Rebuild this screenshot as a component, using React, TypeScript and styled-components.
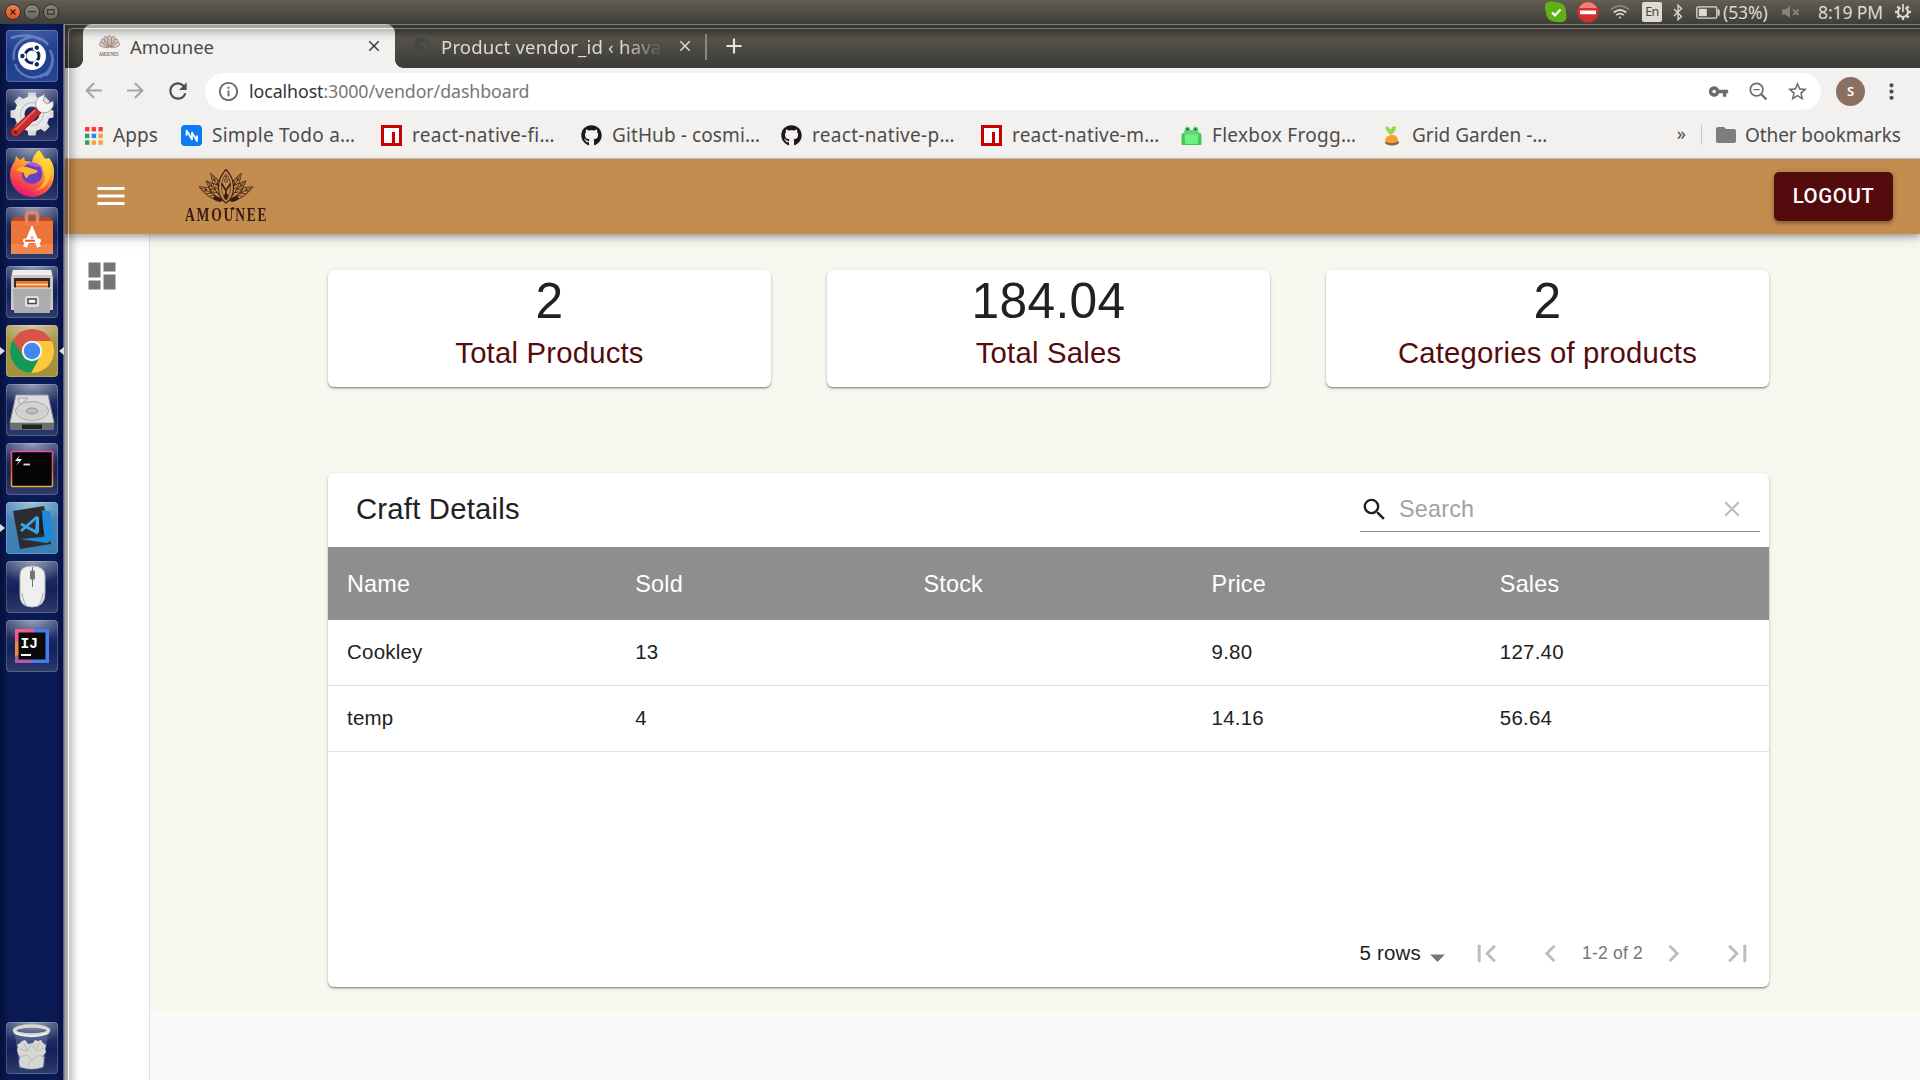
import React from "react";
import styled, { createGlobalStyle, css } from "styled-components";
import {
  MdArrowBack, MdArrowForward, MdRefresh, MdInfoOutline, MdVpnKey, MdStarBorder, MdMoreVert,
  MdFolder, MdMenu, MdDashboard, MdSearch, MdClear, MdFirstPage, MdLastPage, MdChevronLeft,
  MdChevronRight, MdArrowDropDown, MdClose, MdAdd, MdPublic,
} from "react-icons/md";
import { FaGithub } from "react-icons/fa";

const UI = `"Noto Sans", "Open Sans", sans-serif`;
const PAGE = `"Liberation Sans", Arial, sans-serif`;
const Z = 1.4625;

const Global = createGlobalStyle`
  * { box-sizing: border-box; }
  body { margin: 0; background: #0a1950; overflow: hidden; }
  svg { display: block; flex: none; }
`;

const Screen = styled.div`
  width: 1920px; height: 1080px; display: flex; flex-direction: column;
  font-family: ${UI}; overflow: hidden;
`;

/* ---------- system panel ---------- */
const Panel = styled.header`
  height: 24px; flex: none; display: flex; align-items: center; justify-content: space-between;
  padding: 0 9px 0 5px; color: #dfdbd2;
  background: linear-gradient(#66624c 0, #5d5a51 2px, #3f3e39 100%);
`;
const WindowControls = styled.div`display: flex; gap: 3px; padding-bottom: 1px;`;
const Control = styled.span<{ $close?: boolean }>`
  width: 16px; height: 16px; border-radius: 50%; border: 1px solid #33322d;
  display: grid; place-items: center;
  background: ${(p) => (p.$close ? "linear-gradient(#f4835a, #e2501f)" : "linear-gradient(#8a877f, #6a675f)")};
`;
const Tray = styled.div`display: flex; align-items: center; height: 24px;`;
const TrayItem = styled.span<{ $w: number; $gap?: number }>`
  width: ${(p) => p.$w}px; margin-left: ${(p) => p.$gap || 0}px; height: 24px;
  display: flex; align-items: center; flex: none;
`;
const TrayText = styled(TrayItem)<{ $ls: number }>`
  font-size: 17.5px; letter-spacing: ${(p) => p.$ls}px; white-space: nowrap;
`;
const Lang = styled.span`
  width: 20px; height: 20px; background: #dfdbd2; color: #45443e; border-radius: 2px;
  font-size: 12.5px; line-height: 20px; text-align: center; letter-spacing: -0.6px;
`;

/* ---------- launcher ---------- */
const Desktop = styled.div`flex: 1; display: flex; min-height: 0;`;
const Launcher = styled.nav`
  width: 65px; flex: none; display: flex; flex-direction: column; justify-content: space-between;
  padding: 6px 0 6px; background: linear-gradient(90deg, #05103c, #0a1a54 14%, #0a1a54 85%, #06124a 97%, #8d8498 98%);
`;
const LauncherGroup = styled.div`display: flex; flex-direction: column; gap: 7px;`;
const Slot = styled.div<{ $left?: boolean; $right?: boolean }>`
  height: 52px; display: flex; align-items: center; width: 64px;
  &::before, &::after { content: ""; width: 5px; height: 8px; flex: none; }
  &::before { margin-right: 1px; background: ${(p) => (p.$left ? "#dedede" : "transparent")}; clip-path: polygon(0 0, 100% 50%, 0 100%); }
  &::after { margin-left: 1px; background: ${(p) => (p.$right ? "#dedede" : "transparent")}; clip-path: polygon(100% 0, 0 50%, 100% 100%); }
`;
const Tile = styled.div<{ $bg?: string }>`
  width: 52px; height: 52px; border-radius: 4px; flex: none; position: relative;
  background: radial-gradient(ellipse 36px 22px at 50% 0, rgba(255,255,255,.5), rgba(255,255,255,0)),
    ${(p) => p.$bg || "linear-gradient(rgba(255,255,255,.16), rgba(255,255,255,.03) 55%, rgba(255,255,255,.15))"};
  &::after { content: ""; position: absolute; inset: 0; border-radius: 4px; border: 1px solid rgba(255,255,255,.2); }
`;
const AppIcon = styled.svg.attrs({ viewBox: "0 0 52 52" })`width: 52px; height: 52px;`;

/* ---------- browser ---------- */
const Browser = styled.main`
  position: relative; flex: 1; min-width: 0; display: flex; flex-direction: column; background: #f2f1f0;
`;
const LightShade = styled.div`
  position: absolute; inset: 0; pointer-events: none; z-index: 5;
  border-left: 3px solid rgba(0,0,0,.34); border-top: 4px solid rgba(30,30,26,.36);
  &::before {
    content: ""; position: absolute; inset: 0 -10px -10px 0; border-radius: 5px 0 0 0;
    border: 1px solid rgba(255,255,255,.3);
    box-shadow: inset 4px 4px 8px -1px rgba(0,0,0,.3);
  }
  &::after {
    content: ""; position: absolute; left: -3px; right: 0; top: -4px; height: 1px; background: rgba(255,255,230,.35);
  }
`;
const TabStrip = styled.div`
  height: 44px; flex: none; display: flex; align-items: stretch; padding-left: 18px;
  background: linear-gradient(#45443f 0, #45443f 4px, #55524a 14px, #3c3b37 100%);
`;
const flare = css`content: ""; position: absolute; bottom: 0; width: 8px; height: 8px;`;
const ActiveTab = styled.div`
  position: relative; width: 312px; background: #f2f1f0; border-radius: 9px 9px 0 0; color: #4a4a4a;
  display: flex; align-items: center; padding: 0 12px 0 16px; font-size: 18.5px;
  &::before { ${flare} left: -8px; background: radial-gradient(circle at 0 0, transparent 7.5px, #f2f1f0 8px); }
  &::after { ${flare} right: -8px; background: radial-gradient(circle at 100% 0, transparent 7.5px, #f2f1f0 8px); }
`;
const IdleTab = styled(ActiveTab)`
  background: none; width: 310px; color: #dfdbd2; padding: 0 11px 0 16px;
  &::before, &::after { display: none; }
`;
const TabTitle = styled.span<{ $ls: number; $gap: number; $fade?: boolean }>`
  flex: 1; min-width: 0; margin-left: ${(p) => p.$gap}px; letter-spacing: ${(p) => p.$ls}px; white-space: nowrap; overflow: hidden;
  ${(p) => p.$fade && css`margin-right: 12px; mask-image: linear-gradient(90deg, #000 82%, transparent 100%);`}
`;
const TabDivider = styled.span`width: 2px; height: 26px; background: #8a887f; margin: 10px 14px 0 0;`;
const NewTab = styled.span`color: #e8e5df; display: grid; place-items: center;`;

const Toolbar = styled.div`
  height: 46px; flex: none; display: flex; align-items: center; color: #4c4c4c; padding: 0 16px 0 16px;
`;
const NavButtons = styled.div`display: flex; gap: 17px; margin-right: 14px; & > svg:not(:last-child) { color: #a5a5a5; }`;
const Omnibox = styled.div`
  flex: 1; height: 37px; border-radius: 19px; background: #fff; display: flex; align-items: center;
  padding: 0 12px; color: #6b6b6b;
`;
const Url = styled.span`
  flex: 1; margin-left: 9px; font-size: 17.8px; letter-spacing: -0.08px; color: #777; white-space: nowrap;
  b { font-weight: 400; color: #333; }
`;
const OmniActions = styled.div`display: flex; align-items: center; gap: 20px; & > svg:last-child { margin-left: -2px; }`;
const Avatar = styled.span`
  width: 29px; height: 29px; border-radius: 50%; background: #8d6e63; color: #fff; font-size: 13px; font-weight: 600;
  display: grid; place-items: center; margin: 0 14px 0 15px;
`;
const Bookmarks = styled.div`
  height: 45px; flex: none; display: flex; align-items: center; padding: 0 18px 3px 20px;
  border-bottom: 1px solid #c9c8c6; color: #4c4c4c; font-size: 19px;
`;
const Bookmark = styled.div<{ $w: number; $ls?: number }>`
  width: ${(p) => p.$w}px; display: flex; align-items: center; gap: 10px; flex: none;
  letter-spacing: ${(p) => p.$ls || 0}px; white-space: nowrap;
  & > svg { position: relative; top: 1px; }
`;
const Overflow = styled.span`margin-left: auto; margin-right: 15px; font-size: 18px; line-height: 20px; padding-bottom: 4px;`;
const OtherBookmarks = styled.div`
  display: flex; align-items: center; gap: 7px; padding-left: 12px; white-space: nowrap;
  letter-spacing: -0.1px; color: #4c4c4c; width: 201px;
  border-left: 1px solid #c8c7c5; height: 20px;
`;

/* ---------- vendor page ---------- */
const AppBar = styled.div`
  height: 75px; flex: none; background: #c28d4e; display: flex; align-items: center; justify-content: space-between;
  padding: 0 27px 0 28px; color: #fff; z-index: 2;
  box-shadow: 0 3px 6px rgba(0,0,0,.26), 0 5px 12px rgba(0,0,0,.13);
`;
const Brand = styled.div`display: flex; align-items: center; gap: 55px; & > svg { margin-bottom: 2px; }`;
const Logo = styled.div`
  width: 84px; display: flex; flex-direction: column; align-items: center; color: #3b1c14; margin-top: -1px;
`;
const LogoName = styled.span`
  position: relative; font: 700 18.5px/18px "Liberation Serif", serif; letter-spacing: 2.4px; transform: scaleX(.735);
  white-space: nowrap; margin: 2px 0 0 2px;
  &::after { content: ""; position: absolute; left: 63px; top: 1px; width: 4px; height: 3px; border-radius: 50%; background: #3b1c14; }
`;
const Logout = styled.button`
  width: 119px; height: 49px; border: 0; border-radius: 5px; background: #540b0e; color: #fff;
  font: 500 20.4px Roboto, sans-serif; letter-spacing: .6px; padding: 0 0 1px;
  box-shadow: 0 3px 3px rgba(0,0,0,.2), 0 1px 6px rgba(0,0,0,.16);
`;
const Body = styled.div`flex: 1; min-height: 0; display: flex; background: #fafafa;`;
const Side = styled.aside`
  width: 85px; background: #fff; border-right: 1px solid #dfdfdf; padding: 24px 0 0 19px; color: #757575;
`;
const Content = styled.section`
  flex: 1; height: 780px; background: #f9f8f0; padding: 36px 151px 0 178px; display: flex; flex-direction: column; gap: 86px;
`;
const paper = css`
  background: #fff; border-radius: 6px;
  box-shadow: 0 1px 1px rgba(0,0,0,.28), 0 2px 2px rgba(0,0,0,.12), 0 1px 4px rgba(0,0,0,.14);
`;
const Stats = styled.div`display: grid; grid-template-columns: repeat(3, 1fr); gap: 56px;`;
const Stat = styled.div`
  ${paper} height: 117px; text-align: center; font-family: ${PAGE};
`;
const StatValue = styled.div`font-size: 49.7px; line-height: 62px; letter-spacing: .3px; color: #212121;`;
const StatLabel = styled.div`font-size: ${20 * Z}px; line-height: 43px; letter-spacing: .22px; color: #540b0e;`;

const TableCard = styled.div`${paper} height: 514px; font-family: ${PAGE}; color: #212121; display: flex; flex-direction: column;`;
const TableTop = styled.div`
  height: 74px; display: flex; align-items: center; justify-content: space-between; padding: 0 9px 0 28px;
`;
const TableTitle = styled.h6`margin: 0; padding-bottom: 2px; font-weight: 400; font-size: ${20 * Z}px; letter-spacing: .22px;`;
const SearchField = styled.label`
  width: 400px; height: 44px; margin-top: -1px; border-bottom: 1.5px solid #8c8c8c; display: flex; align-items: center;
  padding-right: 15px;
`;
const SearchText = styled.span`flex: 1; margin-left: 10px; font-size: 23.4px; letter-spacing: .18px; color: #a2a2a2;`;
const Row = styled.div<{ $head?: boolean }>`
  height: ${(p) => (p.$head ? 73 : 66)}px; flex: none; display: grid; grid-template-columns: repeat(5, 1fr); align-items: center;
  font-size: ${(p) => (p.$head ? 23.4 : 20.48)}px; letter-spacing: .23px;
  ${(p) => (p.$head ? css`background: #8e8e8e; color: #fff; padding-top: 1px;` : css`border-bottom: 1px solid #e0e0e0; padding-bottom: 1px;`)}
`;
const Cell = styled.span`padding-left: 19px;`;
const Pager = styled.div`margin-top: auto; height: 67px; display: flex; align-items: center; justify-content: flex-end;`;
const RowsSelect = styled.span`
  display: flex; align-items: center; font-size: 20.48px; letter-spacing: .2px; margin-bottom: 1px;
  svg { margin: 8px 0 0 -1px; color: #757575; }
`;
const PageButton = styled.span`width: 63.5px; display: grid; place-items: center; color: #bdbdbd;`;
const PageInfo = styled.span`font-size: 17.55px; letter-spacing: .2px; color: #757575; width: 60px; white-space: nowrap;`;

/* ---------- drawings ---------- */
const Npm = () => (
  <svg width="21" height="21" viewBox="0 0 21 21"><rect width="21" height="21" fill="#cb0000" /><path d="M3 3h15v15h-4V7h-3v11H3z" fill="#fff" /></svg>
);
const AppsGrid = () => (
  <svg width="18" height="18" viewBox="0 0 18 18">
    {["#f53b3b", "#f53b3b", "#f53b3b", "#2ba25b", "#1e90f0", "#f7a233", "#2ba25b", "#f7a233", "#f7a233"].map((c, i) => (
      <rect key={i} x={(i % 3) * 6.7} y={Math.floor(i / 3) * 6.7} width="4.4" height="4.4" fill={c} />
    ))}
  </svg>
);
const Todo = () => (
  <svg width="21" height="21" viewBox="0 0 21 21"><rect width="21" height="21" rx="4" fill="#0a7cf5" /><path d="M5.500 5.500v4.500M6 6l5 8.500V7.500l5 8.500v-5" fill="none" stroke="#fff" strokeWidth="1.700" strokeLinejoin="round" strokeLinecap="round" /></svg>
);
const Frog = () => (
  <svg width="21" height="21" viewBox="0 0 21 21">
    <rect x="0.500" y="8" width="4" height="10" rx="2" fill="#45c45a" /><rect x="16.500" y="8" width="4" height="10" rx="2" fill="#45c45a" /><rect x=".5" y="17" width="20" height="3" rx="1" fill="#45c45a" />
    <circle cx="6.500" cy="4.500" r="2.700" fill="#5fd56c" /><circle cx="14.500" cy="4.500" r="2.700" fill="#5fd56c" />
    <rect x="3" y="5" width="15" height="6" rx="2.500" fill="#5fd56c" /><rect x="3.800" y="9.500" width="13.400" height="9.500" rx="2" fill="#6cf280" />
    <circle cx="6.500" cy="4.300" r="1.100" fill="#234" /><circle cx="14.500" cy="4.300" r="1.100" fill="#234" />
  </svg>
);
const Carrot = () => (
  <svg width="21" height="21" viewBox="0 0 21 21">
    <ellipse cx="11" cy="17.500" rx="7" ry="3" fill="#8a6a35" /><path d="M4 15q1-4.500 6.500-5t6.500 5q-1 3-6.500 3T4 15z" fill="#f8a034" />
    <path d="M10 10Q4 6 4.500 1.500 8 1 9.700 5 11 .5 15 1.500 15 7 10 10z" fill="#92d94a" />
  </svg>
);
const ZoomOut = () => (
  <svg width="19" height="19" viewBox="0 0 19 19" fill="none" stroke="#6b6b6b"><circle cx="7.600" cy="7.600" r="6.300" strokeWidth="1.700" /><path d="M12.300 12.300l5.200 5.200" strokeWidth="2.300" /><path d="M4.600 7.600h6" strokeWidth="1.300" /></svg>
);

/* lotus emblem: three pairs of patterned leaves round a central bud */
const leaf = "M0 0C-7 -5 -7 -14 0 -24 7 -14 7 -5 0 0z";
const leaves = [
  { a: -64, sx: 0.9, sy: 1.24 }, { a: 64, sx: 0.9, sy: 1.24 },
  { a: -46, sx: 0.8, sy: 1.15 }, { a: 46, sx: 0.8, sy: 1.15 },
  { a: -30, sx: 0.75, sy: 1.28 }, { a: 30, sx: 0.75, sy: 1.28 },
];
const Lotus = () => (
  <svg width="56" height="36" viewBox="0 0 56 36" fill="none" stroke="#3b1c14" strokeWidth=".8">
    {leaves.map(({ a, sx, sy }) => (
      <g key={a} transform={`translate(28 32) rotate(${a}) scale(${sx} ${sy})`}>
        <path d={leaf} fill="#c28d4e" /><path d="M0 -6V-22M0 -9l-4 -4M0 -9l4 -4M0 -13l-3.500 -3.500M0 -13l3.500 -3.500M0 -17l-2 -2.500M0 -17l2 -2.500" />
      </g>
    ))}
    <path d="M28 35C19 29 17 13 28 1.500 39 13 37 29 28 35z" fill="#c28d4e" strokeWidth="1.100" />
    <path d="M28 31C22 25 22 13 28 6 34 13 34 25 28 31z" strokeWidth=".6" />
    <path d="M23.500 15.500L28 22.500l4.500-7M28 22v4" strokeWidth="1.700" />
    <circle cx="28" cy="12.500" r="1.600" /><circle cx="28" cy="8.500" r=".7" />
    <path d="M28 25q4 3.500 0 7-4-3.500 0-7z" fill="#3b1c14" />
    <ellipse cx="19.500" cy="31" rx="4.200" ry="1.900" transform="rotate(22 19.500 31)" fill="#3b1c14" />
    <ellipse cx="36.500" cy="31" rx="4.200" ry="1.900" transform="rotate(-22 36.500 31)" fill="#3b1c14" />
  </svg>
);
const Favicon = () => (
  <svg width="21" height="22" viewBox="0 0 21 22">
    <g fill="none" stroke="#8d766d" strokeWidth=".7">
      {[-75, 75, -50, 50, -25, 25, 0].map((a) => <ellipse key={a} cx="10.500" cy="6" rx="2.200" ry="5.300" transform={`rotate(${a} 10.500 11.500)`} fill="#cdbcb4" fillOpacity=".55" />)}
    </g>
    <text transform="translate(0 21) scale(.56 1)" fontFamily="Liberation Serif, serif" fontSize="7" fill="#4a2c2c">AMOUNEE</text>
  </svg>
);

const Dash = () => (
  <AppIcon>
    <rect width="52" height="52" rx="4" fill="#2448a0" opacity=".75" />
    <g fill="none" stroke="#a9bce8" opacity=".45" strokeWidth="2.500"><path d="M8 30a19 19 0 0 1 34-15M44 20a19 19 0 0 1-10 27M38 44A19 19 0 0 1 9 34M5 8q16-6 30 2M46 24q3 12-6 22" /></g>
    <circle cx="26" cy="26" r="14" fill="#fff" /><circle cx="26" cy="26" r="7" fill="none" stroke="#12275f" strokeWidth="3" />
    {[60, 180, 300].map((a) => <g key={a} transform={`rotate(${a} 26 26)`}><circle cx="35" cy="26" r="3.500" fill="#fff" /><circle cx="35.600" cy="26" r="2.200" fill="#12275f" /></g>)}
  </AppIcon>
);
const Settings = () => (
  <AppIcon>
    <g fill="#dcdcdc">{[0, 45, 90, 135, 180, 225, 270, 315].map((a) => <path key={a} d="M21 11L22.500 3.500h7L31 11z" transform={`rotate(${a} 26 25)`} />)}</g>
    <circle cx="26" cy="25" r="12.500" fill="none" stroke="#e6e6e6" strokeWidth="10" /><circle cx="26" cy="25" r="11.500" fill="none" stroke="#bdbdbd" />
    <path d="M31 20a9 9 0 0 1 2-12l6-3-2 7 4 3 6-3a9 9 0 0 1-12 11l-2 1z" fill="#f4f4f4" stroke="#888" strokeWidth=".7" />
    <path d="M29 19l6 5-22 22a4.500 4.500 0 0 1-7-6z" fill="#c92c2c" stroke="#7f1515" strokeWidth=".8" /><path d="M29 21L9 41" stroke="#e97373" strokeWidth="1.500" /><circle cx="9.500" cy="43" r="1.500" fill="#641010" />
  </AppIcon>
);
const Firefox = () => (
  <AppIcon>
    <defs><linearGradient id="ff" x1=".8" y1="0" x2=".3" y2="1"><stop offset="0" stopColor="#fff44f" /><stop offset=".35" stopColor="#ffb02e" /><stop offset=".65" stopColor="#ff5a36" /><stop offset="1" stopColor="#e3127b" /></linearGradient></defs>
    <path d="M33 2q4 4 5 9l5-1q6 7 5 17a22 22 0 0 1-44 0q0-8 5-14l1-5 4 4 4-3 1 4q4 0 7 1Q27 7 33 2z" fill="url(#ff)" />
    <circle cx="26" cy="25.500" r="10.500" fill="#6a40c8" /><path d="M20 16q10-5 17 5-4-3-7-2z" fill="#a35bea" />
    <path d="M10 22q5-5 11-3l6 2q4 1 5 2-2 3-7 3-3 1-4 4-3-1-3-5-4-2-8-3z" fill="#ffb52c" /><path d="M33 4q13 10 11 25-3 12-15 14 13-8 9-20-2-8-6-11z" fill="#ffd93b" opacity=".7" />
  </AppIcon>
);
const Software = () => (
  <AppIcon>
    <path d="M5 14l3-4h36l3 4z" fill="#b94a28" /><rect x="5" y="14" width="42" height="33" fill="#ee7338" /><rect x="5" y="37" width="42" height="10" fill="#f2854c" />
    <path d="M20.500 18V8.500q0-3 3-3h5q3 0 3 3V18" fill="none" stroke="#e8835c" strokeWidth="3.500" />
    <path d="M19 40l7-17 7 17M22 34h9" fill="none" stroke="#fff" strokeWidth="4" /><rect x="17" y="31.500" width="18" height="4.500" rx="2" fill="#fff" /><path d="M19 33.700h10" stroke="#e4572b" strokeWidth="2" />
  </AppIcon>
);
const Files = () => (
  <AppIcon>
    <path d="M7 4h38l2 7v33H5V11z" fill="#c9c9c9" /><path d="M7 4h38l1 5H6z" fill="#eee" /><rect x="8" y="12" width="36" height="12" fill="#3a2a20" />
    <path d="M10 15h32v10H10z" fill="#e9742d" /><path d="M10 18.500h32" stroke="#ffe0b0" strokeWidth="1.500" /><path d="M7 22h38l-1 25H8z" fill="#adadad" /><path d="M7 22h38" stroke="#e5e5e5" />
    <rect x="19" y="30" width="14" height="11" rx="2.500" fill="#dcdcdc" /><rect x="22" y="33" width="8" height="4.500" fill="#fff" stroke="#444" strokeWidth="1.500" />
  </AppIcon>
);
const Chrome = () => (
  <AppIcon>
    <circle cx="26" cy="26" r="22" fill="#fbc93a" />
    <path d="M6.900 15A22 22 0 0 1 45.100 15L46 16H26L16 31z" fill="#d65548" /><path d="M6.900 15A22 22 0 0 0 25 48L34 32 17 31z" fill="#149a56" />
    <circle cx="26" cy="26" r="10.200" fill="#f4f4f4" /><circle cx="26" cy="26" r="8.200" fill="#4285f4" />
  </AppIcon>
);
const Disk = () => (
  <AppIcon>
    <path d="M10 11h32l6 28H4z" fill="#dcdcdc" stroke="#9a9a9a" /><path d="M4 39h44v5q0 2-2 2H6q-2 0-2-2z" fill="#6f6f6f" /><path d="M16 40.500h20V45H16z" fill="#222" />
    <ellipse cx="26" cy="27" rx="16.500" ry="9.500" fill="#d2d2d2" stroke="#aaa" /><ellipse cx="26" cy="27" rx="5.500" ry="3" fill="#bfbfbf" stroke="#8f8f8f" /><path d="M12 14h10l-8 7z" fill="none" stroke="#aaa" />
  </AppIcon>
);
const Terminal = () => (
  <AppIcon>
    <defs><linearGradient id="tm" x2="0" y2="1"><stop stopColor="#ef4fa8" /><stop offset=".5" stopColor="#f0503e" /><stop offset="1" stopColor="#f2b01e" /></linearGradient></defs>
    <rect x="5.500" y="8.500" width="41" height="35" rx="1" fill="#050505" stroke="url(#tm)" strokeWidth="1.500" /><path d="M14 12l-5 6h4l-3 5 6-7h-4z" fill="#fff" /><path d="M17.500 21.500H24" stroke="#ddd" strokeWidth="1.800" />
  </AppIcon>
);
const Code = () => (
  <AppIcon>
    <path d="M7 9l31-5 7 38-31 5z" fill="#2d2d30" /><path d="M36 8l8 1.500 3.500 28-7 3.500-26-4 23-2z" fill="#1c8ad8" /><path d="M35 10l3.500 25-5-6z" fill="#1d1d1f" />
    <path d="M15 22l17 9M15 29l16-14" stroke="#3fa3e8" strokeWidth="2.800" /><path d="M30 14l3 1v15l-4 2z" fill="#3fa3e8" />
  </AppIcon>
);
const Mouse = () => (
  <AppIcon>
    <path d="M14 14q0-9 12-9t13 9v18q0 14-13 14T14 32z" fill="#efefef" stroke="#b5b5b5" /><path d="M16 32q2 11 5 13M37 32q-2 11-5 13" stroke="#aaa" fill="none" />
    <path d="M26.500 6v20" stroke="#777" /><rect x="24" y="9" width="5" height="10" rx="2.500" fill="#777" />
  </AppIcon>
);
const Idea = () => (
  <AppIcon>
    <path d="M9 9h19l-2 34H9z" fill="#f35a8c" /><path d="M9 22h8v14H9z" fill="#ee8b3d" /><path d="M28 9h15v34H24z" fill="#3f7ff0" /><path d="M9 36l8-2 12 9H9z" fill="#b25aa8" />
    <rect x="12.500" y="12.500" width="27" height="27" fill="#0a0a0a" /><path d="M15 35h10" stroke="#fff" strokeWidth="2" />
    <text x="14.500" y="27.500" fill="#fff" fontFamily="Liberation Mono, monospace" fontWeight="700" fontSize="14.500">IJ</text>
  </AppIcon>
);
const Trash = () => (
  <AppIcon>
    <path d="M9 12l4 34q13 4 25 0l4-34z" fill="#8390b8" opacity=".35" />
    <path d="M11 23l3-2 2-2 3-1 2 2 1 2 5-1 2-3 3 1 3-1 2 3 3 2-1 4 1 3-3 4 1 4-1 7q-11 4-23 0l-1-5 1-5-2-3-1-4 1-3z" fill="#d6d7d4" />
    <path d="M14 27l7 2 4-6 6 6 7-3M13 35l8-2 5 5 8-5 5 3M22 44l3-6M18 22l4 7M33 21l-3 7" stroke="#b9bbb8" fill="none" />
    <ellipse cx="25.500" cy="8.500" rx="17" ry="4.500" fill="none" stroke="#d8dad5" strokeWidth="3.500" /><path d="M8.500 11q17 7 34 0" stroke="#f2f2ef" strokeWidth="1.500" fill="none" />
  </AppIcon>
);

const apps = [
  { icon: <Dash /> }, { icon: <Settings /> }, { icon: <Firefox /> }, { icon: <Software /> }, { icon: <Files /> },
  { icon: <Chrome />, bg: "linear-gradient(#a8964a, #a48f3c)", left: true, right: true },
  { icon: <Disk /> }, { icon: <Terminal /> }, { icon: <Code />, bg: "linear-gradient(#4a87b8, #3c7db4)", left: true },
  { icon: <Mouse /> }, { icon: <Idea /> },
];
const bookmarks = [
  { icon: <Todo />, label: "Simple Todo a…", ls: 0.25 }, { icon: <Npm />, label: "react-native-fi…", ls: 0.3 },
  { icon: <FaGithub size={21} color="#1b1817" />, label: "GitHub - cosmi…", ls: 0.1 },
  { icon: <FaGithub size={21} color="#1b1817" />, label: "react-native-p…", ls: 0.3 },
  { icon: <Npm />, label: "react-native-m…", ls: 0.2 }, { icon: <Frog />, label: "Flexbox Frogg…", ls: 0.3 },
  { icon: <Carrot />, label: "Grid Garden -…", ls: 0 },
];
const stats = [["2", "Total Products"], ["184.04", "Total Sales"], ["2", "Categories of products"]];
const rows = [["Cookley", "13", "", "9.80", "127.40"], ["temp", "4", "", "14.16", "56.64"]];

const SystemPanel = () => (
  <Panel>
    <WindowControls>
      <Control $close><svg width="6" height="6" viewBox="0 0 6 6"><path d="M.5.500l5 5M5.500.500l-5 5" stroke="#40200f" strokeWidth="1.300" /></svg></Control>
      <Control><svg width="8" height="2"><rect width="8" height="1.200" fill="#35342f" /></svg></Control>
      <Control><svg width="8" height="6"><rect x=".6" y=".6" width="6.500" height="4.500" fill="none" stroke="#35342f" strokeWidth="1.200" /></svg></Control>
    </WindowControls>
    <Tray>
      <TrayItem $w={22}><svg width="22" height="22" viewBox="0 0 22 22"><path d="M1 2q4-3 9-1 11 0 11 10 1 4 0 8-3 3-8 2Q1 21 1 11-1 6 1 2z" fill="#62b018" /><path d="M7 11.500l3 3 5.500-6" stroke="#fff" strokeWidth="2.200" fill="none" /></svg></TrayItem>
      <TrayItem $w={22} $gap={10}><svg width="22" height="22" viewBox="0 0 22 22"><circle cx="11" cy="11" r="10.600" fill="#d6302c" /><path d="M2 7a10 10 0 0 1 18 0z" fill="#ee8078" /><rect x="3" y="9.500" width="16" height="3.800" rx=".6" fill="#fff" /></svg></TrayItem>
      <TrayItem $w={20} $gap={11}><svg width="20" height="14" viewBox="0 0 20 14" fill="none" strokeWidth="1.700"><path d="M.8 4.500q9.200-7.500 18.400 0" stroke="#85827a" /><path d="M3.700 7.500q6.300-5 12.600 0M6.300 10.200q3.700-3 7.400 0" stroke="#dfdbd2" /><circle cx="10" cy="12.500" r="1" fill="#dfdbd2" stroke="none" /></svg></TrayItem>
      <TrayItem $w={20} $gap={12}><Lang>En</Lang></TrayItem>
      <TrayItem $w={10} $gap={11}><svg width="10" height="17" viewBox="0 0 10 17"><path d="M1 5l7.500 7.500L5 15.800V1.200l3.500 3.300L1 12" fill="none" stroke="#dfdbd2" strokeWidth="1.300" /></svg></TrayItem>
      <TrayItem $w={24} $gap={13}><svg width="24" height="13" viewBox="0 0 24 13"><rect x=".8" y=".8" width="20" height="11.400" rx="1.500" fill="none" stroke="#dfdbd2" strokeWidth="1.300" /><rect x="2.800" y="2.800" width="8" height="7.400" fill="#dfdbd2" /><rect x="21.800" y="3.500" width="1.800" height="6" fill="#dfdbd2" /></svg></TrayItem>
      <TrayText $w={49} $gap={3} $ls={-0.1}>(53%)</TrayText>
      <TrayItem $w={18} $gap={10}><svg width="18" height="12" viewBox="0 0 18 12"><path d="M0 3.500h3L8 0v12L3 8.500H0z" fill="#85827a" /><path d="M11 3.500l5.500 5.500M16.500 3.500L11 9" stroke="#85827a" strokeWidth="1.800" /></svg></TrayItem>
      <TrayText $w={68} $gap={18} $ls={-0.1}>8:19 PM</TrayText>
      <TrayItem $w={16} $gap={9}><svg width="16" height="16" viewBox="0 0 16 16"><g stroke="#dfdbd2" fill="none"><path d="M5.500 3.600a5 5 0 1 0 5 0" strokeWidth="2" /><path d="M8 0v8" strokeWidth="1.700" />{[45, 90, 135, 180, 225, 270, 315].map((a) => <path key={a} d="M8 0v2.600" strokeWidth="2.400" transform={`rotate(${a} 8 8)`} />)}</g></svg></TrayItem>
    </Tray>
  </Panel>
);

export default function App() {
  return (
    <Screen>
      <Global />
      <SystemPanel />
      <Desktop>
        <Launcher>
          <LauncherGroup>
            {apps.map((a, i) => <Slot key={i} $left={a.left} $right={a.right}><Tile $bg={a.bg}>{a.icon}</Tile></Slot>)}
          </LauncherGroup>
          <Slot><Tile><Trash /></Tile></Slot>
        </Launcher>
        <Browser>
          <LightShade />
          <TabStrip>
            <ActiveTab><Favicon /><TabTitle $gap={10} $ls={0}>Amounee</TabTitle><MdClose size={18} color="#3c3c3c" /></ActiveTab>
            <IdleTab><MdPublic size={21} color="#45464b" /><TabTitle $gap={9} $ls={0.2} $fade>Product vendor_id ‹ havana</TabTitle><MdClose size={18} /></IdleTab>
            <TabDivider />
            <NewTab><MdAdd size={26} /></NewTab>
          </TabStrip>
          <Toolbar>
            <NavButtons><MdArrowBack size={25} /><MdArrowForward size={25} /><MdRefresh size={26} /></NavButtons>
            <Omnibox>
              <MdInfoOutline size={23} />
              <Url><b>localhost</b>:3000/vendor/dashboard</Url>
              <OmniActions><MdVpnKey size={21} /><ZoomOut /><MdStarBorder size={23} /></OmniActions>
            </Omnibox>
            <Avatar>S</Avatar>
            <MdMoreVert size={25} />
          </Toolbar>
          <Bookmarks>
            <Bookmark $w={96} $ls={0.1}><AppsGrid /><span>Apps</span></Bookmark>
            {bookmarks.map((b, i) => <Bookmark key={i} $w={200} $ls={b.ls}>{b.icon}<span>{b.label}</span></Bookmark>)}
            <Overflow>»</Overflow>
            <OtherBookmarks><MdFolder size={24} color="#7d7d7d" />Other bookmarks</OtherBookmarks>
          </Bookmarks>
          <AppBar>
            <Brand>
              <MdMenu size={36} />
              <Logo><Lotus /><LogoName>AMOUNEE</LogoName></Logo>
            </Brand>
            <Logout>LOGOUT</Logout>
          </AppBar>
          <Body>
            <Side><MdDashboard size={36} /></Side>
            <Content>
              <Stats>{stats.map(([v, l]) => <Stat key={l}><StatValue>{v}</StatValue><StatLabel>{l}</StatLabel></Stat>)}</Stats>
              <TableCard>
                <TableTop>
                  <TableTitle>Craft Details</TableTitle>
                  <SearchField><MdSearch size={29} /><SearchText>Search</SearchText><MdClear size={26} color="#bdbdbd" /></SearchField>
                </TableTop>
                <Row $head>{["Name", "Sold", "Stock", "Price", "Sales"].map((h) => <Cell key={h}>{h}</Cell>)}</Row>
                {rows.map((r) => <Row key={r[0]}>{r.map((c, i) => <Cell key={i}>{c}</Cell>)}</Row>)}
                <Pager>
                  <RowsSelect>5 rows<MdArrowDropDown size={35} /></RowsSelect>
                  <PageButton><MdFirstPage size={35} /></PageButton>
                  <PageButton><MdChevronLeft size={35} /></PageButton>
                  <PageInfo>1-2 of 2</PageInfo>
                  <PageButton><MdChevronRight size={35} /></PageButton>
                  <PageButton><MdLastPage size={35} /></PageButton>
                </Pager>
              </TableCard>
            </Content>
          </Body>
        </Browser>
      </Desktop>
    </Screen>
  );
}
